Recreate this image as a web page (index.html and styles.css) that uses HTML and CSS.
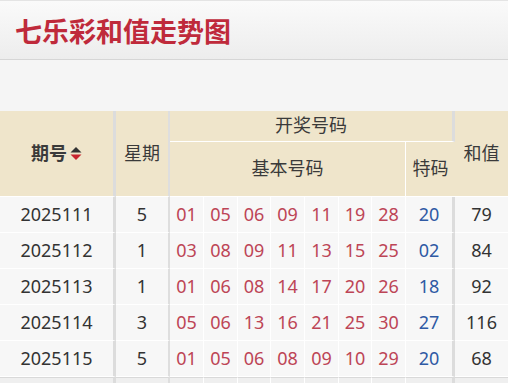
FILE: index.html
```html
<!DOCTYPE html>
<html lang="zh-CN">
<head>
<meta charset="utf-8">
<title>七乐彩和值走势图</title>
<link rel="stylesheet" href="styles.css">
</head>
<body>
<header class="topbar">
  <h1 class="title">七乐彩和值走势图</h1>
</header>
<div class="board">
  <table class="trend">
    <colgroup>
      <col class="c-issue"><col class="c-week">
      <col class="c-n34"><col class="c-n34"><col class="c-n33"><col class="c-n34"><col class="c-n34"><col class="c-n33"><col class="c-n34">
      <col class="c-sp"><col class="c-sum">
    </colgroup>
    <thead>
      <tr class="h1">
        <th rowspan="2" class="issue sep3"><span class="sortable">期号<svg class="sort" width="12" height="13" viewBox="0 0 12 13"><path d="M6 0 L11.5 5.5 H0.5 Z" fill="#333"/><path d="M0.5 7.5 H11.5 L6 13 Z" fill="#c8242f"/></svg></span></th>
        <th rowspan="2" class="sep2">星期</th>
        <th colspan="8" class="sep3">开奖号码</th>
        <th rowspan="2">和值</th>
      </tr>
      <tr class="h2">
        <th colspan="7">基本号码</th>
        <th class="sep3">特码</th>
      </tr>
    </thead>
    <tbody>
      <tr><td class="sep3">2025111</td><td class="sep2">5</td><td class="r">01</td><td class="r">05</td><td class="r">06</td><td class="r">09</td><td class="r">11</td><td class="r">19</td><td class="r">28</td><td class="b sep3">20</td><td>79</td></tr>
      <tr><td class="sep3">2025112</td><td class="sep2">1</td><td class="r">03</td><td class="r">08</td><td class="r">09</td><td class="r">11</td><td class="r">13</td><td class="r">15</td><td class="r">25</td><td class="b sep3">02</td><td>84</td></tr>
      <tr><td class="sep3">2025113</td><td class="sep2">1</td><td class="r">01</td><td class="r">06</td><td class="r">08</td><td class="r">14</td><td class="r">17</td><td class="r">20</td><td class="r">26</td><td class="b sep3">18</td><td>92</td></tr>
      <tr><td class="sep3">2025114</td><td class="sep2">3</td><td class="r">05</td><td class="r">06</td><td class="r">13</td><td class="r">16</td><td class="r">21</td><td class="r">25</td><td class="r">30</td><td class="b sep3">27</td><td>116</td></tr>
      <tr><td class="sep3">2025115</td><td class="sep2">5</td><td class="r">01</td><td class="r">05</td><td class="r">06</td><td class="r">08</td><td class="r">09</td><td class="r">10</td><td class="r">29</td><td class="b sep3">20</td><td>68</td></tr>
    </tbody>
    <tfoot>
      <tr class="foot"><td class="sep3"></td><td class="sep2"></td><td></td><td></td><td></td><td></td><td></td><td></td><td></td><td class="sep3"></td><td></td></tr>
    </tfoot>
  </table>
</div>
</body>
</html>
```
FILE: styles.css
```css
* { box-sizing: border-box; }
html, body { margin: 0; height: 100%; overflow: hidden; }
body {
  background: #f5f5f5;
  font-family: "Noto Sans", "Noto Sans CJK SC", sans-serif;
  color: #333;
}
.topbar {
  height: 60px;
  border-top: 1px solid #e4e4e4;
  border-bottom: 1px solid #d6d6d6;
  background: linear-gradient(#fafafa, #ededed);
  display: flex;
  align-items: center;
  padding-left: 15px;
}
.title {
  margin: 0;
  font-family: "Noto Sans CJK SC", sans-serif;
  font-size: 27px;
  font-weight: 700;
  line-height: 1;
  color: #bf2a3b;
}
.board { margin-top: 51px; }
.trend {
  border-collapse: separate;
  border-spacing: 0;
  table-layout: fixed;
  width: 508px;
  font-size: 18px;
  line-height: 1.2;
}
.c-issue { width: 116px; }
.c-week { width: 54px; }
.c-n34 { width: 34px; }
.c-n33 { width: 33px; }
.c-sp { width: 49px; }
.c-sum { width: 53px; }
.trend th, .trend td {
  padding: 0;
  text-align: center;
  vertical-align: middle;
  border-right: 1px solid #fff;
  border-bottom: 1px solid #fff;
}
.trend th {
  background: #efe5cb;
  font-weight: 400;
  color: #3a3a3a;
}
.trend .h1 th { height: 31px; }
.trend .h2 th { height: 55px; }
.trend td {
  height: 36px;
  background: #f7f7f7;
  color: #333;
}
.trend tr > :last-child { border-right: 0; }
.trend .sep3 { border-right: 3px solid #dcdcdc; }
.trend .sep2 { border-right: 2px solid #dedede; }
.trend th.issue { font-weight: 700; }
.sortable { display: inline-flex; align-items: center; gap: 3px; }
.sort { display: block; }
.trend td.r { color: #bd4556; }
.trend td.b { color: #2f5aa4; }
.trend .foot td {
  height: 20px;
  background: #efefef;
  border-top: 1px solid #d9d9d9;
}
```
